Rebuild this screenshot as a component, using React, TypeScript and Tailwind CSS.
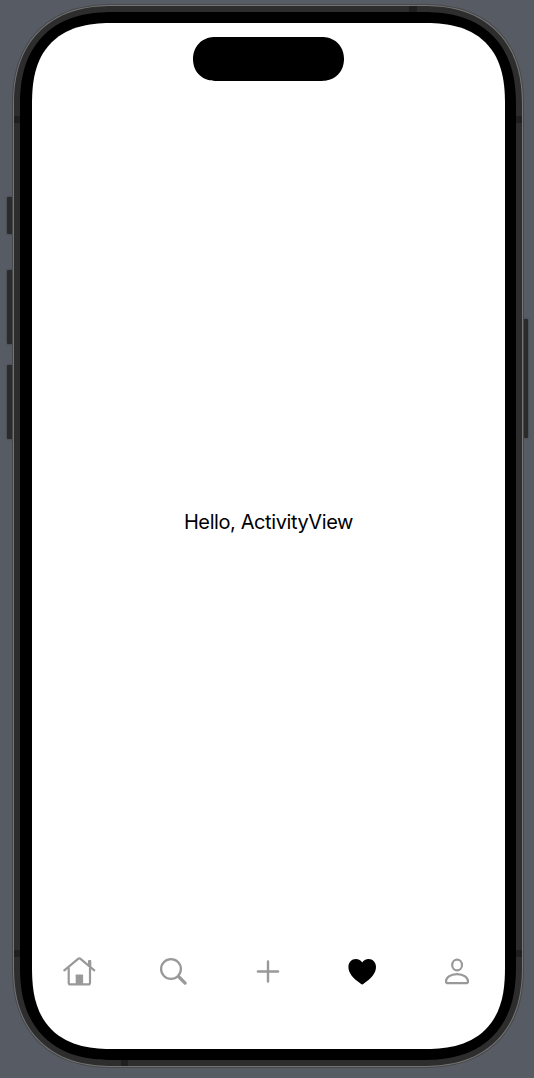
import React from "react";

const bands = [
  "left-0 top-[110px] h-[7px] w-[6px]",
  "right-0 top-[110px] h-[7px] w-[6px]",
  "left-0 top-[944px] h-[7px] w-[6px]",
  "right-0 top-[944px] h-[7px] w-[6px]",
  "left-[395px] top-0 h-[6px] w-[8px]",
  "left-[107px] bottom-0 h-[6px] w-[7px]",
];

const sideButtons = [
  "left-[7px] top-[197px] h-[37px] w-[6px]",
  "left-[7px] top-[270px] h-[74px] w-[6px]",
  "left-[7px] top-[365px] h-[74px] w-[6px]",
  "left-[523px] top-[319px] h-[119px] w-[5px]",
];

function Icon({ children }: { children: React.ReactNode }) {
  return (
    <svg
      width="36"
      height="36"
      viewBox="0 0 36 36"
      fill="none"
      stroke="currentColor"
      strokeWidth="2.2"
      strokeLinecap="round"
      strokeLinejoin="round"
    >
      {children}
    </svg>
  );
}

function HomeIcon() {
  return (
    <Icon>
      <path d="M3.3 17.4 17.4 5.7Q18.3 5 19.2 5.7L33.3 17.4" />
      <path d="M7.7 15V29.7Q7.7 31.4 9.4 31.4H27.3Q29 31.4 29 29.7V15" />
      <path d="M27 8Q27 7 28 7H29.3Q30.3 7 30.3 8V14.8L27 12Z" fill="currentColor" stroke="none" />
      <path d="M14.7 31.6V22.2Q14.7 21.6 15.3 21.6H21.5Q22.1 21.6 22.1 22.2V31.6Z" fill="currentColor" stroke="none" />
    </Icon>
  );
}

function SearchIcon() {
  return (
    <Icon>
      <circle cx="16" cy="16" r="9.9" strokeWidth="2.3" />
      <path d="M24 24 30.1 30.1" strokeWidth="3.3" />
    </Icon>
  );
}

function PlusIcon() {
  return (
    <Icon>
      <path d="M18 8.4V28.6M7.9 18.5H28.1" strokeWidth="2.4" />
    </Icon>
  );
}

function HeartIcon() {
  return (
    <Icon>
      <path
        d="M17.2 31.5C16.8 31.5 16.2 31.1 15.5 30.6C8.2 25.6 3.4 20.1 3.4 14.1C3.4 9.3 6.7 6 10.8 6C13.7 6 15.9 7.2 17.2 9.5C18.5 7.2 20.8 6 23.6 6C27.7 6 31 9.3 31 14.1C31 20.1 26.2 25.6 18.9 30.6C18.2 31.1 17.6 31.5 17.2 31.5Z"
        fill="currentColor"
        stroke="none"
      />
    </Icon>
  );
}

function PersonIcon() {
  return (
    <Icon>
      <ellipse cx="18.1" cy="12" rx="4.9" ry="5.4" strokeWidth="2.2" />
      <path d="M8.9 30.1C7.6 30.1 7 29.4 7 28.4C7 25 11.1 21.1 18 21.1S29 25 29 28.4C29 29.4 28.4 30.1 27.1 30.1Z" strokeWidth="2.2" />
    </Icon>
  );
}

const tabs = [
  { name: "Home", Glyph: HomeIcon, active: false },
  { name: "Search", Glyph: SearchIcon, active: false },
  { name: "New post", Glyph: PlusIcon, active: false },
  { name: "Activity", Glyph: HeartIcon, active: true },
  { name: "Profile", Glyph: PersonIcon, active: false },
];

export default function App() {
  return (
    <div className="relative h-[1078px] w-[534px] overflow-hidden bg-[#575b63] pl-[12px] pt-[4px]">
      {sideButtons.map((place) => (
        <span key={place} className={`absolute rounded-[1px] bg-[#2b2b2b] shadow-[0_0_2px_#33363a] ${place}`} />
      ))}
      <div className="relative h-[1064px] w-[512px] rounded-[101px] bg-[#46484b] p-px [corner-shape:superellipse(1.22)]">
        <div className="h-full rounded-[100px] bg-[#747474] p-px [corner-shape:superellipse(1.22)]">
          <div className="relative h-full overflow-hidden rounded-[99px] bg-[#2d2d2d] p-[6px] [corner-shape:superellipse(1.22)]">
            {bands.map((place) => (
              <span key={place} className={`absolute bg-[#1f1f1f] ${place}`} />
            ))}
            <div className="h-full rounded-[93px] bg-black pb-[11px] pl-[12px] pr-[11px] pt-[11px] [corner-shape:superellipse(1.25)]">
              <main className="relative flex h-full flex-col overflow-hidden rounded-[82px] bg-white [corner-shape:superellipse(1.35)]">
                <div className="absolute left-[161px] top-[14px] h-[44px] w-[151px] rounded-[22px] bg-black [corner-shape:superellipse(1.08)]" />
                <div className="flex h-[998px] shrink-0 items-center justify-center font-['Inter',sans-serif] text-[20px] tracking-[-0.4px] text-black">
                  Hello, ActivityView
                </div>
                <nav className="absolute inset-x-0 top-[930px] grid grid-cols-5">
                  {tabs.map(({ name, Glyph, active }) => (
                    <button
                      key={name}
                      aria-label={name}
                      className={`flex justify-center pr-px ${active ? "text-black" : "text-[#999999]"}`}
                    >
                      <Glyph />
                    </button>
                  ))}
                </nav>
              </main>
            </div>
          </div>
        </div>
      </div>
    </div>
  );
}
